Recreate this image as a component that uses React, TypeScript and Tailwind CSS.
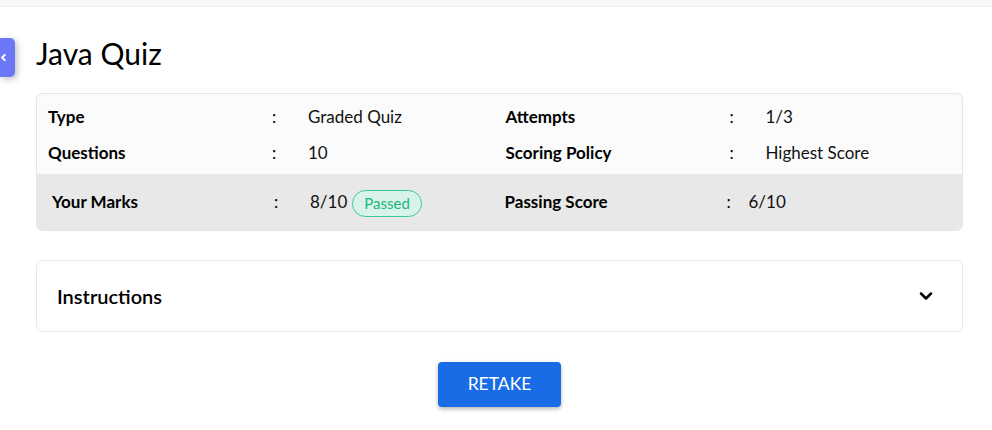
import { ChevronDown, ChevronLeft } from "lucide-react";

const font = { fontFamily: "Lato, 'Noto Sans', sans-serif" };

function InfoCell({ label, value, labelW = "w-[224px]", colonW = "w-[36px]" }: { label: string; value: React.ReactNode; labelW?: string; colonW?: string }) {
  return (
    <div className="flex items-center leading-[24px]">
      <div className={`${labelW} shrink-0 text-[17px] font-bold text-black`}>{label}</div>
      <div className={`${colonW} shrink-0 text-[17px] text-black`}>:</div>
      <div className="flex items-center text-[17px] text-[#111]">{value}</div>
    </div>
  );
}

export default function App() {
  return (
    <div className="min-h-[430px] bg-white" style={font}>
      <div className="h-[7px] border-b border-[#ececf0] bg-[#f7f8fa]" />

      <div className="flex">
        <div className="pt-[31px]">
          <button className="flex h-[39px] w-[15px] items-center justify-start rounded-r-[5px] bg-[#6b77f7] shadow-[2px_2px_6px_rgba(0,0,0,0.25)]">
            <ChevronLeft className="h-[11px] w-[11px] -ml-[2px] text-white" strokeWidth={4} />
          </button>
        </div>

        <main className="ml-[21px] w-[927px]">
          <h1 className="mt-[26px] h-[40px] text-[30px] leading-[40px] text-black">Java Quiz</h1>

          <div className="mt-[20px] overflow-hidden rounded-[6px] border border-[#e6e6e6] bg-[#fbfbfb]">
            <div className="grid grid-cols-2 gap-y-[12px] px-[11px] pt-[11px] pb-[9px]">
              <InfoCell label="Type" value="Graded Quiz" />
              <div className="pl-[6px]"><InfoCell label="Attempts" value="1/3" /></div>
              <InfoCell label="Questions" value="10" />
              <div className="pl-[6px]"><InfoCell label="Scoring Policy" value="Highest Score" /></div>
            </div>
            <div className="grid h-[56px] grid-cols-2 items-center bg-[#e8e8e8] px-[15px]">
              <InfoCell
                label="Your Marks"
                labelW="w-[222px]"
                value={
                  <>
                    <span>8/10</span>
                    <span className="ml-[5px] mt-[2px] rounded-full border border-[#3cc99a] bg-[#d8f4ea] px-[11px] py-[2px] text-[15px] leading-[21px] text-[#1db67f]">
                      Passed
                    </span>
                  </>
                }
              />
              <div className="pl-[5px]">
                <InfoCell label="Passing Score" labelW="w-[222px]" colonW="w-[22px]" value="6/10" />
              </div>
            </div>
          </div>

          <div className="mt-[29px] flex h-[72px] items-center justify-between rounded-[6px] border border-[#e8e8e8] bg-white pl-[20px] pr-[26px]">
            <span className="text-[20px] font-semibold text-black">Instructions</span>
            <ChevronDown className="h-[20px] w-[20px] text-black" strokeWidth={3} />
          </div>

          <div className="mt-[30px] flex justify-center">
            <button className="h-[45px] w-[123px] rounded-[4px] bg-[#1a6be6] text-[17.5px] text-white shadow-[0_2px_4px_rgba(0,0,0,0.3)]">
              RETAKE
            </button>
          </div>
        </main>
      </div>
    </div>
  );
}
